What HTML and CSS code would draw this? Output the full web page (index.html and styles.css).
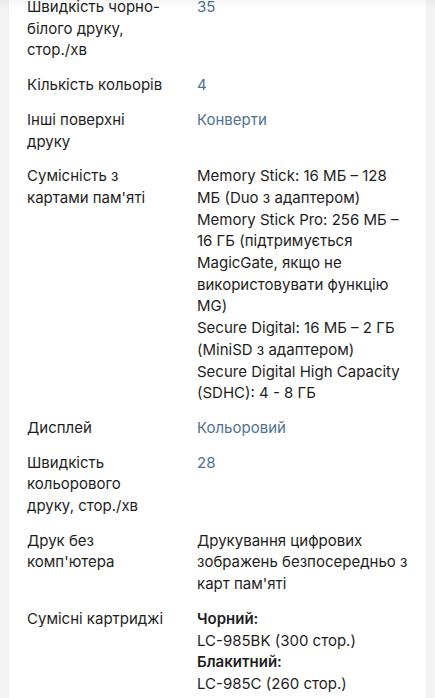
FILE: index.html
```html
<!DOCTYPE html>
<html lang="uk">
<head>
<meta charset="utf-8">
<link rel="stylesheet" href="styles.css">
</head>
<body>
<div class="card">
  <dl class="specs">
    <div class="row"><dt>Швидкість чорно-білого друку, стор./хв</dt><dd class="link">35</dd></div>
    <div class="row"><dt>Кількість кольорів</dt><dd class="link">4</dd></div>
    <div class="row"><dt>Інші поверхні друку</dt><dd class="link">Конверти</dd></div>
    <div class="row"><dt>Сумісність з картами пам'яті</dt><dd>Memory Stick: 16 МБ – 128 МБ (Duo з адаптером)<br>Memory Stick Pro: 256 МБ – 16 ГБ (підтримується MagicGate, якщо не використовувати функцію MG)<br>Secure Digital: 16 МБ – 2 ГБ (MiniSD з адаптером)<br>Secure Digital High Capacity (SDHC): 4 - 8 ГБ</dd></div>
    <div class="row"><dt>Дисплей</dt><dd class="link">Кольоровий</dd></div>
    <div class="row"><dt>Швидкість кольорового друку, стор./хв</dt><dd class="link">28</dd></div>
    <div class="row"><dt>Друк без комп'ютера</dt><dd>Друкування цифрових зображень безпосередньо з карт пам'яті</dd></div>
    <div class="row"><dt>Сумісні картриджі</dt><dd><b>Чорний:</b><br>LC-985BK (300 стор.)<br><b>Блакитний:</b><br>LC-985C (260 стор.)</dd></div>
  </dl>
</div>
<div class="topshade"></div>
</body>
</html>
```
FILE: styles.css
```css
html, body {
  margin: 0;
  padding: 0;
  background: #f3f3f3;
  font-family: Inter, "Noto Sans", sans-serif;
  font-size: 15px;
  line-height: 21.7px;
  color: #1e1e1e;
}
.card {
  background: #fff;
  margin: 0 9px;
  padding: 0 18px 40px 18px;
}
.specs {
  margin: -4px 0 0 0;
  padding: 0;
  display: flex;
  flex-direction: column;
  gap: 13px;
}
.row {
  display: grid;
  grid-template-columns: 140px 1fr;
  column-gap: 30px;
}
dt, dd {
  margin: 0;
}
dd.link {
  color: #4f7291;
}
dd b {
  font-weight: 600;
}
.topshade {
  position: fixed;
  left: 0;
  right: 0;
  top: 0;
  height: 10px;
  background: linear-gradient(to bottom, rgba(0,0,0,0.035), rgba(0,0,0,0));
  pointer-events: none;
}
```
